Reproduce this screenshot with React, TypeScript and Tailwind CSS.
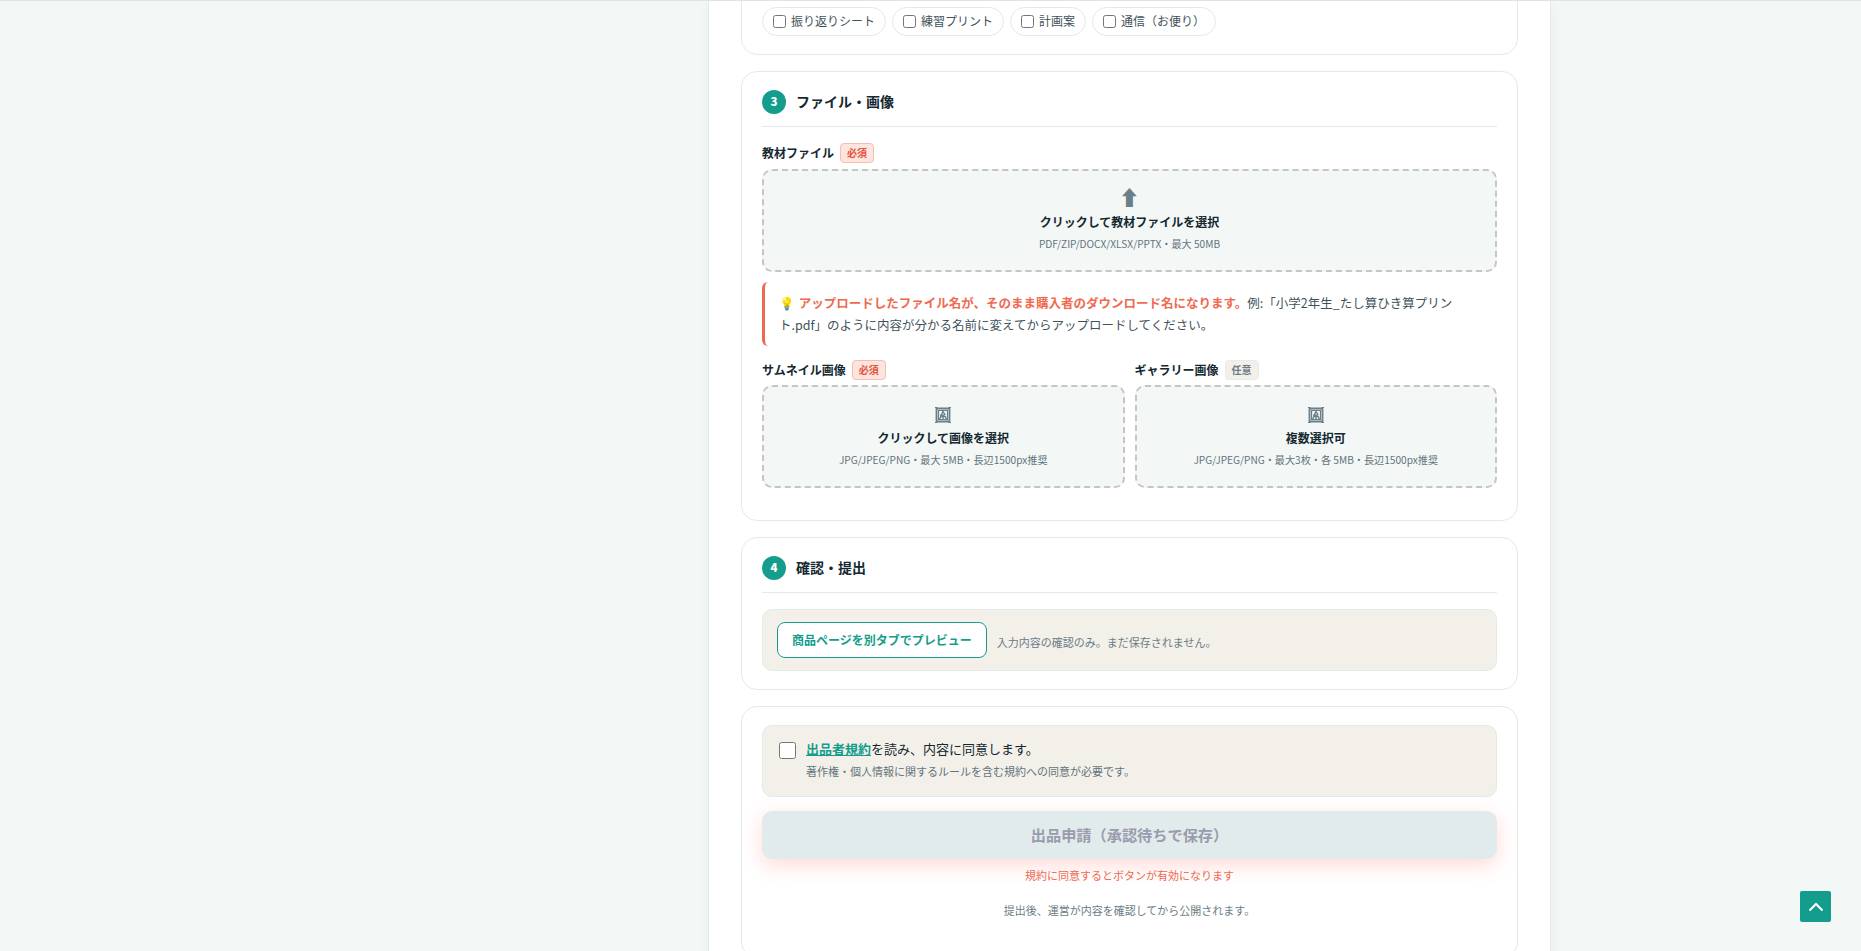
import { ReactNode } from 'react';
import clsx from 'clsx';

const materialTypes = ['振り返りシート', '練習プリント', '計画案', '通信（お便り）'];

function PictureIcon() {
  return (
    <svg className="mt-[3px]" width="16" height="16" viewBox="0 0 16 16" fill="none" stroke="#6b7f88" strokeWidth="1.2">
      <path d="M1.500 1.500h13v13h-13z" strokeWidth="1.800" />
      <path d="M3.500 3.500h9v9h-9z" />
      <path d="M0 .5h2.500M13.500.5H16M0 15.500h2.500M13.500 15.500H16" />
      <path d="M4.500 12.500 6 9l-.5-1.500M11.500 12.500 10 9M6 9.500h4M6.500 7.500 8 4.500l1.800 3L8 8.500zM8 9v3.500" strokeWidth="1.400" />
    </svg>
  );
}

function Badge({ required }: { required?: boolean }) {
  return (
    <span
      className={clsx(
        'flex h-5 items-center rounded-[4px] border px-1.5 text-[10px] font-bold leading-none',
        required
          ? 'border-[#f3beb3] bg-[#fde4de] text-[#e2553b]'
          : 'border-[#e6ebe9] bg-[#f3f0ea] text-[#6b7c85]',
      )}
    >
      {required ? '必須' : '任意'}
    </span>
  );
}

function FieldLabel({ label, required }: { label: string; required?: boolean }) {
  return (
    <div className="flex h-5 items-center gap-1.5">
      <span className="text-[12px] font-bold leading-none">{label}</span>
      <Badge required={required} />
    </div>
  );
}

interface UploadBoxProps {
  icon: ReactNode;
  title: string;
  hint: string;
}

function UploadBox({ icon, title, hint }: UploadBoxProps) {
  return (
    <div className="flex h-[103px] flex-col items-center rounded-[10px] border-2 border-dashed border-[#c8c5bc] bg-[#f3f7f6] pt-3.5">
      <span className="flex h-6 items-center text-[20.8px] leading-6 text-[#6b7f88]">{icon}</span>
      <span className="mt-[3px] text-[12px] font-bold leading-5">{title}</span>
      <span className="mt-[3px] text-[10.15px] leading-[18px] text-[#63747d]">{hint}</span>
    </div>
  );
}

function SectionHeading({ step, children }: { step: number; children: ReactNode }) {
  return (
    <div className="flex h-[37px] items-start gap-2.5 border-b border-[#e2eaea]">
      <span className="flex size-6 items-center justify-center rounded-full bg-[#149c8c] text-[11.5px] font-black text-white">
        {step}
      </span>
      <h2 className="text-[14px] font-bold leading-[22px]">{children}</h2>
    </div>
  );
}

export default function App() {
  return (
    <div className="flex h-[951px] overflow-hidden border-t border-[#dfe3e3] bg-[#f3f7f6] pl-[708px] font-['Noto_Sans_CJK_JP','Noto_Sans',sans-serif] text-[#142830]">
      <main className="h-[1000px] w-[843px] shrink-0 border-x border-[#e2eaea] bg-white px-8 shadow-[0_2px_12px_rgba(20,40,48,0.05)]">
        <section className="-mt-5 h-[74px] rounded-2xl border border-[#e2eaea] px-5 pt-[25px]">
          <div className="flex gap-1.5">
            {materialTypes.map((type) => (
              <label
                key={type}
                className="flex h-[29px] items-center gap-[5px] rounded-full border border-[#e2eaea] px-2.5 text-[12px] text-[#3f525b]"
              >
                <input type="checkbox" className="size-[13px]" />
                <span className="pb-px">{type}</span>
              </label>
            ))}
          </div>
        </section>

        <section className="mt-4 h-[450px] rounded-2xl border border-[#e2eaea] px-5 pt-[18px]">
          <SectionHeading step={3}>ファイル・画像</SectionHeading>

          <div className="mt-4">
            <FieldLabel label="教材ファイル" required />
            <div className="mt-1.5">
              <UploadBox
                icon="⬆"
                title="クリックして教材ファイルを選択"
                hint="PDF/ZIP/DOCX/XLSX/PPTX・最大 50MB"
              />
            </div>
          </div>

          <p className="mt-2.5 h-16 rounded-md border-l-3 border-[#ec6a52] px-3.5 py-2.5 text-[12.5px] leading-[22px] text-[#3f525b]">
            <span className="mr-px">💡</span>{' '}
            <strong className="font-bold text-[#ef6a50]">
              アップロードしたファイル名が、そのまま購入者のダウンロード名になります。
            </strong>
            例:「小学2年生_たし算ひき算プリント.pdf」のように内容が分かる名前に変えてからアップロードしてください。
          </p>

          <div className="mt-3.5 grid grid-cols-2 gap-2.5">
            <div>
              <FieldLabel label="サムネイル画像" required />
              <div className="mt-[5px]">
                <UploadBox
                  icon={<PictureIcon />}
                  title="クリックして画像を選択"
                  hint="JPG/JPEG/PNG・最大 5MB・長辺1500px推奨"
                />
              </div>
            </div>
            <div>
              <FieldLabel label="ギャラリー画像" />
              <div className="mt-[5px]">
                <UploadBox
                  icon={<PictureIcon />}
                  title="複数選択可"
                  hint="JPG/JPEG/PNG・最大3枚・各 5MB・長辺1500px推奨"
                />
              </div>
            </div>
          </div>
        </section>

        <section className="mt-4 h-[153px] rounded-2xl border border-[#e2eaea] px-5 pt-[18px]">
          <SectionHeading step={4}>確認・提出</SectionHeading>
          <div className="mt-4 flex h-[62px] items-center gap-2.5 rounded-[10px] border border-[#e2eaea] bg-[#f3f0ea] px-3.5">
            <button className="h-9 rounded-lg border border-[#149c8c] bg-white px-3.5 text-[12px] font-bold text-[#149c8c]">
              商品ページを別タブでプレビュー
            </button>
            <span className="pt-1 text-[11px] text-[#6b7c85]">入力内容の確認のみ。まだ保存されません。</span>
          </div>
        </section>

        <section className="mt-4 h-[252px] rounded-2xl border border-[#e2eaea] px-5 pt-[18px]">
          <label className="flex h-[72px] items-start gap-2.5 rounded-[10px] border border-[#e2eaea] bg-[#f3f0ea] px-4 pt-3.5">
            <input type="checkbox" className="mt-0.5 size-[17px]" />
            <span className="flex flex-col">
              <span className="text-[13px] leading-[18px]">
                <a className="font-bold text-[#149c8c] underline">出品者規約</a>を読み、内容に同意します。
              </span>
              <span className="mt-1 text-[11px] leading-[18px] text-[#63747d]">
                著作権・個人情報に関するルールを含む規約への同意が必要です。
              </span>
            </span>
          </label>

          <button
            disabled
            className="mt-3.5 h-12 w-full rounded-[10px] bg-[#e2ebeb] pb-0.5 text-[15.2px] font-bold text-[#9a9bad] shadow-[0_6px_20px_rgba(255,107,82,0.25)]"
          >
            出品申請（承認待ちで保存）
          </button>
          <p className="mt-[7px] text-center text-[11px] leading-[18px] text-[#ec6a52]">
            規約に同意するとボタンが有効になります
          </p>
          <p className="mt-[17px] text-center text-[11px] leading-[18px] text-[#6b7c85]">
            提出後、運営が内容を確認してから公開されます。
          </p>
        </section>
      </main>

      <button
        aria-label="ページの先頭へ"
        className="fixed bottom-[29px] right-[30px] flex size-[31px] items-center justify-center rounded-[2px] bg-[#149c8c]"
      >
        <svg width="16" height="10" viewBox="0 0 16 10" fill="none" stroke="#fff" strokeWidth="2">
          <path d="M1.5 8.5 8 2l6.500 6.500" />
        </svg>
      </button>
    </div>
  );
}
